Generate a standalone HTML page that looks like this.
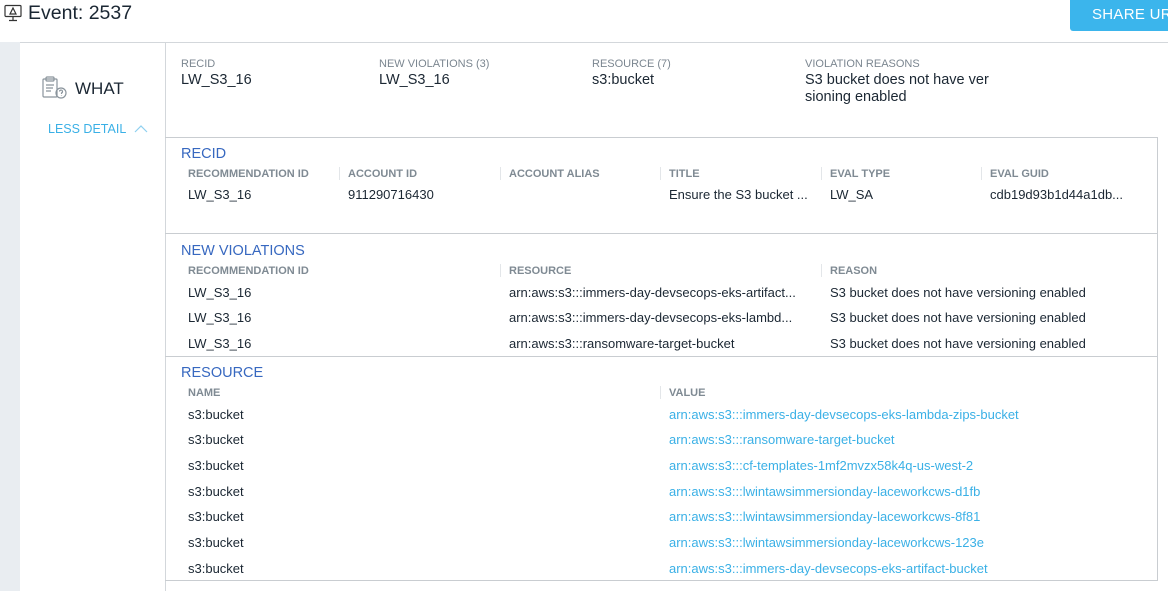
<!DOCTYPE html>
<html><head><meta charset="utf-8"><style>
*{margin:0;padding:0;box-sizing:border-box}
body{width:1168px;height:591px;overflow:hidden;background:#fff;font-family:"Liberation Sans",sans-serif;color:#1b2733;position:relative}
.a{position:absolute;white-space:nowrap}
.lbl{font-size:11px;color:#7b8690}
.val{font-size:14.5px;color:#1b2733}
.h{font-size:14.5px;color:#3768c0}
.th{font-size:11px;font-weight:bold;color:#7f8a93}
.td{font-size:13px;color:#1b2733}
.lk{font-size:13px;color:#3ab0e6}
.sep{position:absolute;width:1px;height:13px;background:#e3e6e9}
</style></head><body>
<svg class="a" style="left:4px;top:4px" width="18" height="18" viewBox="0 0 18 18" fill="none" stroke="#333" stroke-width="1.2"><rect x="1" y="1.5" width="16" height="11" rx="1"/><path d="M9 4 L12 10 H6 Z"/><path d="M9 12.5 V16 M5 16.5 H13"/></svg>
<div class="a" style="left:28px;top:2px;font-size:19.5px">Event: 2537</div>
<div class="a" style="left:1070px;top:0;width:98px;height:31px;background:#3bb5ec;border-radius:0 0 0 3px;color:#fff;font-size:15px;line-height:30px;padding-left:22px;letter-spacing:0.3px">SHARE URL</div>
<div class="a" style="left:20px;top:42px;width:1148px;height:1px;background:#d3d7db"></div>
<div class="a" style="left:0;top:42px;width:20px;height:549px;background:#e9edf1"></div>
<div class="a" style="left:165px;top:42px;width:1px;height:549px;background:#d3d7db"></div>
<svg class="a" style="left:42px;top:76px" width="26" height="24" viewBox="0 0 26 24" fill="none" stroke="#8a949c" stroke-width="1.2"><rect x="1" y="3" width="14" height="18" rx="1"/><rect x="4" y="1" width="8" height="4" rx="1"/><path d="M4 9h8M4 12h7M4 15h5"/><circle cx="19" cy="17" r="5"/><path d="M17.5 15.5a1.5 1.5 0 1 1 2 1.5v1M19.5 19.5v.5"/></svg>
<div class="a" style="left:75px;top:79px;font-size:17px">WHAT</div>
<div class="a" style="left:48px;top:122px;font-size:12.5px;color:#3ab0e6">LESS DETAIL</div>
<svg class="a" style="left:134px;top:124px" width="14" height="9" viewBox="0 0 14 9" fill="none" stroke="#8fd0f0" stroke-width="1.2"><path d="M1 8 L7 2 L13 8"/></svg>

<div class="a lbl" style="left:181px;top:58px">RECID</div><div class="a val" style="left:181px;top:72px">LW_S3_16</div>
<div class="a lbl" style="left:379px;top:58px">NEW VIOLATIONS (3)</div><div class="a val" style="left:379px;top:72px">LW_S3_16</div>
<div class="a lbl" style="left:592px;top:58px">RESOURCE (7)</div><div class="a val" style="left:592px;top:72px">s3:bucket</div>
<div class="a lbl" style="left:805px;top:58px">VIOLATION REASONS</div><div class="a val" style="left:805px;top:72px;line-height:17px">S3 bucket does not have ver<br>sioning enabled</div>

<div class="a" style="left:165px;top:137px;width:993px;height:444px;border:1px solid #c9cdd1;border-left:none"></div>
<div class="a" style="left:165px;top:233px;width:993px;height:1px;background:#c9cdd1"></div>
<div class="a" style="left:165px;top:356px;width:993px;height:1px;background:#c9cdd1"></div>

<div class="a h" style="left:181px;top:146px">RECID</div>
<div class="a th" style="left:188px;top:168px">RECOMMENDATION ID</div>
<div class="sep" style="left:339px;top:167px"></div><div class="a th" style="left:348px;top:168px">ACCOUNT ID</div>
<div class="sep" style="left:500px;top:167px"></div><div class="a th" style="left:509px;top:168px">ACCOUNT ALIAS</div>
<div class="sep" style="left:660px;top:167px"></div><div class="a th" style="left:669px;top:168px">TITLE</div>
<div class="sep" style="left:821px;top:167px"></div><div class="a th" style="left:830px;top:168px">EVAL TYPE</div>
<div class="sep" style="left:981px;top:167px"></div><div class="a th" style="left:990px;top:168px">EVAL GUID</div>
<div class="a td" style="left:188px;top:187px">LW_S3_16</div>
<div class="a td" style="left:348px;top:187px">911290716430</div>
<div class="a td" style="left:669px;top:187px">Ensure the S3 bucket ...</div>
<div class="a td" style="left:830px;top:187px">LW_SA</div>
<div class="a td" style="left:990px;top:187px">cdb19d93b1d44a1db...</div>

<div class="a h" style="left:181px;top:243px">NEW VIOLATIONS</div>
<div class="a th" style="left:188px;top:265px">RECOMMENDATION ID</div>
<div class="sep" style="left:500px;top:264px"></div><div class="a th" style="left:509px;top:265px">RESOURCE</div>
<div class="sep" style="left:821px;top:264px"></div><div class="a th" style="left:830px;top:265px">REASON</div>
<div class="a td" style="left:188px;top:285px">LW_S3_16</div><div class="a td" style="left:509px;top:285px">arn:aws:s3:::immers-day-devsecops-eks-artifact...</div><div class="a td" style="left:830px;top:285px">S3 bucket does not have versioning enabled</div>
<div class="a td" style="left:188px;top:310px">LW_S3_16</div><div class="a td" style="left:509px;top:310px">arn:aws:s3:::immers-day-devsecops-eks-lambd...</div><div class="a td" style="left:830px;top:310px">S3 bucket does not have versioning enabled</div>
<div class="a td" style="left:188px;top:336px">LW_S3_16</div><div class="a td" style="left:509px;top:336px">arn:aws:s3:::ransomware-target-bucket</div><div class="a td" style="left:830px;top:336px">S3 bucket does not have versioning enabled</div>

<div class="a h" style="left:181px;top:365px">RESOURCE</div>
<div class="a th" style="left:188px;top:387px">NAME</div>
<div class="sep" style="left:660px;top:386px"></div><div class="a th" style="left:669px;top:387px">VALUE</div>
<div class="a td" style="left:188px;top:407px">s3:bucket</div><div class="a lk" style="left:669px;top:407px">arn:aws:s3:::immers-day-devsecops-eks-lambda-zips-bucket</div>
<div class="a td" style="left:188px;top:432px">s3:bucket</div><div class="a lk" style="left:669px;top:432px">arn:aws:s3:::ransomware-target-bucket</div>
<div class="a td" style="left:188px;top:458px">s3:bucket</div><div class="a lk" style="left:669px;top:458px">arn:aws:s3:::cf-templates-1mf2mvzx58k4q-us-west-2</div>
<div class="a td" style="left:188px;top:484px">s3:bucket</div><div class="a lk" style="left:669px;top:484px">arn:aws:s3:::lwintawsimmersionday-laceworkcws-d1fb</div>
<div class="a td" style="left:188px;top:509px">s3:bucket</div><div class="a lk" style="left:669px;top:509px">arn:aws:s3:::lwintawsimmersionday-laceworkcws-8f81</div>
<div class="a td" style="left:188px;top:535px">s3:bucket</div><div class="a lk" style="left:669px;top:535px">arn:aws:s3:::lwintawsimmersionday-laceworkcws-123e</div>
<div class="a td" style="left:188px;top:561px">s3:bucket</div><div class="a lk" style="left:669px;top:561px">arn:aws:s3:::immers-day-devsecops-eks-artifact-bucket</div>
</body></html>
